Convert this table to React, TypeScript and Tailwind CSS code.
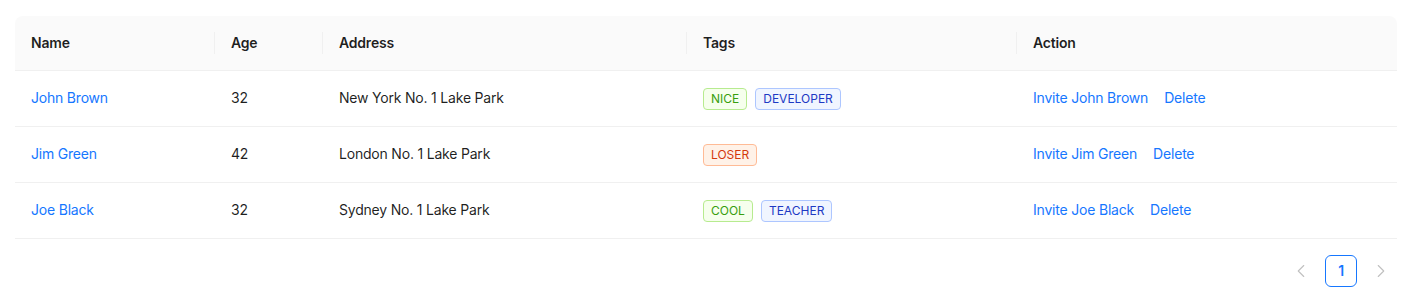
import { ChevronLeft, ChevronRight } from 'lucide-react';

type Tag = { label: string; tone: 'green' | 'geekblue' | 'volcano' };

interface Row {
  key: string;
  name: string;
  age: number;
  address: string;
  tags: Tag[];
}

const data: Row[] = [
  {
    key: '1',
    name: 'John Brown',
    age: 32,
    address: 'New York No. 1 Lake Park',
    tags: [
      { label: 'NICE', tone: 'green' },
      { label: 'DEVELOPER', tone: 'geekblue' },
    ],
  },
  {
    key: '2',
    name: 'Jim Green',
    age: 42,
    address: 'London No. 1 Lake Park',
    tags: [{ label: 'LOSER', tone: 'volcano' }],
  },
  {
    key: '3',
    name: 'Joe Black',
    age: 32,
    address: 'Sydney No. 1 Lake Park',
    tags: [
      { label: 'COOL', tone: 'green' },
      { label: 'TEACHER', tone: 'geekblue' },
    ],
  },
];

const toneClass: Record<Tag['tone'], string> = {
  green: 'text-[#389e0d] bg-[#f6ffed] border-[#b7eb8f]',
  geekblue: 'text-[#1d39c4] bg-[#f0f5ff] border-[#adc6ff]',
  volcano: 'text-[#d4380d] bg-[#fff2e8] border-[#ffbb96]',
};

const columns = ['Name', 'Age', 'Address', 'Tags', 'Action'];

export default function App() {
  return (
    <div
      className="bg-white px-[15px] pt-4 text-sm tracking-[-0.2px] text-[rgba(0,0,0,0.88)]"
      style={{ fontFamily: 'Inter, "Noto Sans", "Liberation Sans", sans-serif' }}
    >
      <table className="w-full table-fixed border-separate border-spacing-0">
        <colgroup>
          <col className="w-[200px]" />
          <col className="w-[108px]" />
          <col className="w-[364px]" />
          <col className="w-[330px]" />
          <col />
        </colgroup>
        <thead>
          <tr>
            {columns.map((col, i) => (
              <th
                key={col}
                className={
                  'relative h-[55px] border-b border-[#f0f0f0] bg-[#fafafa] px-4 pb-px text-left font-semibold ' +
                  (i === 0 ? 'rounded-tl-lg ' : '') +
                  (i === columns.length - 1 ? 'rounded-tr-lg' : '')
                }
              >
                {col}
                {i < columns.length - 1 && (
                  <span className="absolute right-0 top-1/2 h-[22px] w-px -translate-y-1/2 bg-[#f0f0f0]" />
                )}
              </th>
            ))}
          </tr>
        </thead>
        <tbody>
          {data.map(row => (
            <tr key={row.key}>
              <td className="h-14 border-b border-[#f0f0f0] px-4 pb-px">
                <a className="cursor-pointer text-[#1677ff]">{row.name}</a>
              </td>
              <td className="border-b border-[#f0f0f0] px-4 pb-px">{row.age}</td>
              <td className="border-b border-[#f0f0f0] px-4 pb-px">{row.address}</td>
              <td className="border-b border-[#f0f0f0] px-4">
                <div className="flex gap-2">
                  {row.tags.map(tag => (
                    <span
                      key={tag.label}
                      className={
                        'inline-flex h-[22px] items-center rounded border px-[7px] text-xs tracking-normal ' +
                        toneClass[tag.tone]
                      }
                    >
                      {tag.label}
                    </span>
                  ))}
                </div>
              </td>
              <td className="border-b border-[#f0f0f0] px-4 pb-px">
                <div className="flex gap-4 text-[#1677ff]">
                  <a className="cursor-pointer">Invite {row.name}</a>
                  <a className="cursor-pointer">Delete</a>
                </div>
              </td>
            </tr>
          ))}
        </tbody>
      </table>

      {/* Pagination */}
      <div className="my-4 flex justify-end gap-2">
        <button className="flex h-8 w-8 items-center justify-center text-[rgba(0,0,0,0.25)]">
          <ChevronLeft className="h-[22px] w-[22px]" strokeWidth={1.2} />
        </button>
        <button className="flex h-8 w-8 items-center justify-center rounded-md border border-[#1677ff] font-semibold text-[#1677ff]">
          1
        </button>
        <button className="flex h-8 w-8 items-center justify-center text-[rgba(0,0,0,0.25)]">
          <ChevronRight className="h-[22px] w-[22px]" strokeWidth={1.2} />
        </button>
      </div>
    </div>
  );
}
